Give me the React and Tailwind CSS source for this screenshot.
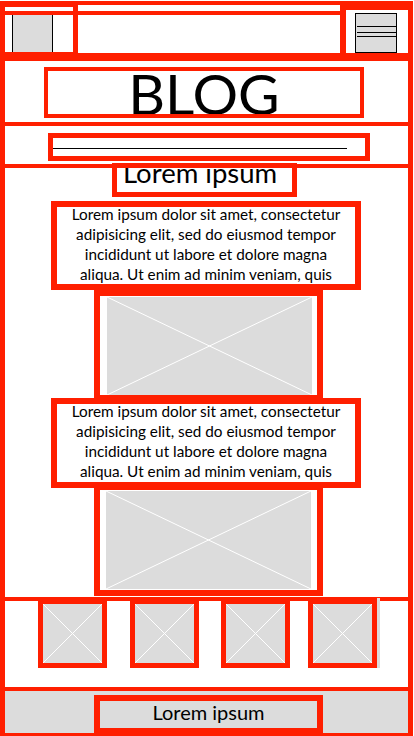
import React from "react";

// wireframe placeholder: grey block with a white cross
function Placeholder({ className = "" }) {
  return (
    <svg
      className={`block bg-[#dcdcdc] ${className}`}
      viewBox="0 0 100 100"
      preserveAspectRatio="none"
    >
      <line x1="0" y1="0" x2="100" y2="100" stroke="#ffffff" strokeWidth="1" vectorEffect="non-scaling-stroke" />
      <line x1="100" y1="0" x2="0" y2="100" stroke="#ffffff" strokeWidth="1" vectorEffect="non-scaling-stroke" />
    </svg>
  );
}

const lines = [
  "Lorem ipsum dolor sit amet, consectetur",
  "adipisicing elit, sed do eiusmod tempor",
  "incididunt ut labore et dolore magna",
  "aliqua. Ut enim ad minim veniam, quis",
];

function Paragraph({ className = "" }) {
  return (
    <div
      className={`mr-px w-[310px] shrink-0 overflow-hidden border-[6px] border-[#ff1f00] text-center text-[15.3px] leading-[20px] ${className}`}
    >
      <div className="-mt-[3px]">
        {lines.map((l) => (
          <div key={l} className="whitespace-nowrap">
            {l}
          </div>
        ))}
      </div>
    </div>
  );
}

export default function App() {
  return (
    <div className="h-[736px] w-[414px] overflow-hidden bg-white pt-px font-[Lato,sans-serif] text-black">
      <div className="w-[413px]">
        {/* Header */}
        <div className="flex h-[56px] items-start border-x-[5px] border-t-[4px] border-[#ff1f00]">
          <div className="-mt-[4px] -ml-[5px] h-[56px] w-[78px] shrink-0 border-[5px] border-t-[6px] border-[#ff1f00]">
            <div className="mt-[7px] ml-[7px] h-[38px] w-[41px] border-x border-black bg-[#dcdcdc]" />
          </div>
          <div className="mt-[6px] -ml-[78px] h-[46px] w-[345px] shrink-0 border-[4px] border-[#ff1f00]" />
          <div className="-ml-[5px] h-[54px] w-[73px] shrink-0 border-[5px] border-b-[6px] border-l-[6px] border-[#ff1f00]">
            <div className="mt-[3px] ml-[9px] flex h-[40px] w-[42px] flex-col border border-black bg-[#dcdcdc]">
              <div className="mt-[12px] ml-px h-px bg-black" />
              <div className="mt-[5px] ml-px h-px bg-black" />
              <div className="mt-[3px] ml-px h-px bg-black" />
            </div>
          </div>
        </div>

        {/* Title */}
        <div className="h-[65px] border-x-[5px] border-t-[4px] border-[#ff1f00]">
          <div className="mt-[6px] ml-[39px] h-[51px] w-[320px] overflow-hidden border-[4px] border-[#ff1f00]">
            <div className="-mt-[7px] text-center text-[57px] leading-[58px] font-normal">BLOG</div>
          </div>
        </div>

        {/* Divider */}
        <div className="h-[42px] border-x-[5px] border-t-[4px] border-[#ff1f00]">
          <div className="mt-[7px] ml-[43px] h-[28px] w-[322px] border-[5px] border-[#ff1f00]">
            <div className="mt-[10px] h-px w-[294px] bg-black" />
          </div>
        </div>

        {/* Posts */}
        <div className="flex h-[433px] flex-col items-center border-x-[5px] border-t-[4px] border-[#ff1f00]">
          <div className="-mt-[5px] mr-[4px] h-[34px] w-[185px] shrink-0 overflow-hidden border-[5px] border-[#ff1f00]">
            <div className="-mt-[9px] pl-[6px] text-[27.5px] leading-[28px] whitespace-nowrap">Lorem ipsum</div>
          </div>
          <Paragraph className="mt-[4px] h-[89px]" />
          <div className="ml-[4px] flex h-[108px] w-[229px] shrink-0 border-[6px] border-b-[3px] border-[#ff1f00] pt-px pr-[5px] pl-[7px]">
            <Placeholder className="h-full w-full" />
          </div>
          <Paragraph className="h-[90px]" />
          <div className="-mt-[3px] ml-[4px] flex h-[111px] w-[229px] shrink-0 border-[6px] border-t-[5px] border-[#ff1f00] px-[6px] py-px">
            <Placeholder className="h-full w-full" />
          </div>
        </div>

        {/* Thumbnails */}
        <div className="flex h-[90px] items-start border-x-[5px] border-t-[4px] border-[#ff1f00]">
          <div className="-mt-[3px] ml-[33px] h-[70px] w-[69px] shrink-0 border-[5px] border-t-[6px] border-[#ff1f00]">
            <Placeholder className="h-full w-full" />
          </div>
          <div className="-mt-[3px] ml-[23px] h-[70px] w-[69px] shrink-0 border-[5px] border-t-[6px] border-[#ff1f00]">
            <Placeholder className="h-full w-full" />
          </div>
          <div className="-mt-[3px] ml-[22px] h-[70px] w-[69px] shrink-0 border-[5px] border-t-[6px] border-[#ff1f00]">
            <Placeholder className="h-full w-full" />
          </div>
          <div className="-mt-[3px] ml-[18px] h-[70px] w-[69px] shrink-0 border-[5px] border-t-[6px] border-[#ff1f00] shadow-[3px_0_0_#dcdcdc]">
            <Placeholder className="h-full w-full" />
          </div>
        </div>

        {/* Footer */}
        <div className="h-[49px] border-x-[5px] border-t-[4px] border-b-[3px] border-[#ff1f00] bg-[#dcdcdc]">
          <div className="mt-[4px] ml-[89px] h-[39px] w-[229px] border-[6px] border-[#ff1f00] text-center text-[20px] leading-[23px]">
            Lorem ipsum
          </div>
        </div>
      </div>
    </div>
  );
}
